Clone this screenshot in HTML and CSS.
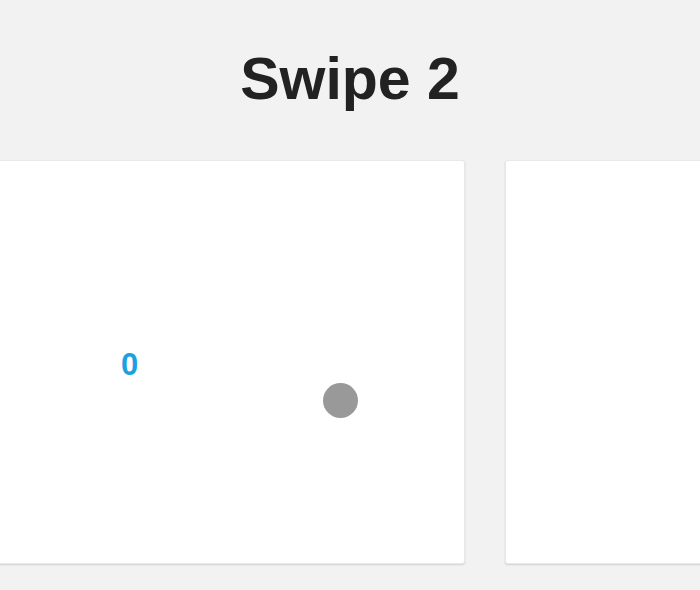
FILE: index.html
```html
<!DOCTYPE html>
<html>
<head>
<meta charset="utf-8">
<link rel="stylesheet" href="styles.css">
</head>
<body>
<header class="header"><h1 class="title">Swipe 2</h1></header>
<div class="viewport">
  <div class="track">
    <div class="card">
      <div class="slide-row">
        <span class="count">0</span>
        <span class="dot"></span>
      </div>
    </div>
    <div class="card"></div>
  </div>
</div>
</body>
</html>
```
FILE: styles.css
```css
html, body {
  margin: 0;
  padding: 0;
  background: #f2f2f2;
  font-family: "Liberation Sans", Arial, sans-serif;
  overflow: hidden;
}
.header {
  height: 160px;
  box-sizing: border-box;
  padding-top: 50px;
  text-align: center;
}
.title {
  margin: 0;
  font-size: 59px;
  line-height: 59px;
  font-weight: bold;
  color: #222;
}
.viewport {
  overflow: hidden;
  height: 430px;
}
.track {
  display: flex;
  gap: 40px;
  transform: translateX(-35px);
}
.card {
  flex: 0 0 500px;
  height: 404px;
  box-sizing: border-box;
  background: #fff;
  border: 1px solid #e8e8e8;
  border-radius: 3px;
  box-shadow: 0 1px 2px rgba(0,0,0,0.14);
  padding: 188px 0 0 155px;
}
.slide-row {
  display: flex;
  align-items: flex-start;
}
.count {
  font-size: 31px;
  line-height: 31px;
  font-weight: bold;
  color: #1ba1e2;
}
.dot {
  width: 35px;
  height: 35px;
  border-radius: 50%;
  background: #999;
  margin-left: 185px;
  margin-top: 34px;
}
```
